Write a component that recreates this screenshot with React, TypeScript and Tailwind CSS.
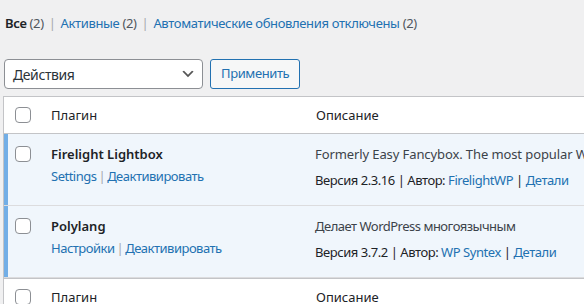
import React from "react";

const font = { fontFamily: '"Noto Sans", "Open Sans", sans-serif' };

type Plugin = {
  name: string;
  actions: string[];
  description: string;
  descTracking: string;
  version: string;
  author: string;
};

const plugins: Plugin[] = [
  {
    name: "Firelight Lightbox",
    actions: ["Settings", "Деактивировать"],
    description:
      "Formerly Easy Fancybox. The most popular WordPress lightbox plugin for images, galleries and videos.",
    descTracking: "tracking-[-0.1px]",
    version: "2.3.16",
    author: "FirelightWP",
  },
  {
    name: "Polylang",
    actions: ["Настройки", "Деактивировать"],
    description: "Делает WordPress многоязычным",
    descTracking: "tracking-[-0.5px]",
    version: "3.7.2",
    author: "WP Syntex",
  },
];

function Checkbox() {
  return (
    <span className="block h-4 w-4 rounded-[4px] border border-[#8c8f94] bg-white" />
  );
}

function HeaderRow({ top }: { top?: boolean }) {
  return (
    <div
      className={`flex h-[37px] bg-white ${
        top ? "border-b border-[#c3c4c7]" : "border-t border-[#c3c4c7]"
      }`}
    >
      <div className="flex w-[37px] shrink-0 justify-center pt-[10px] pl-[1px]">
        <Checkbox />
      </div>
      <div className="w-[264px] shrink-0 pl-[10px] text-[13px] leading-[37px] text-[#1d2327]">
        Плагин
      </div>
      <div className="flex-1 whitespace-nowrap pl-[11px] text-[13px] leading-[37px] text-[#1d2327]">
        Описание
      </div>
    </div>
  );
}

function PluginRow({ plugin }: { plugin: Plugin }) {
  return (
    <div className="flex h-[72px] border-b border-[#dcdcde] bg-[#f0f6fc] shadow-[inset_4px_0_0_#72aee6]">
      <div className="flex w-[37px] shrink-0 justify-center pt-[12px] pl-[1px]">
        <Checkbox />
      </div>
      <div className="w-[264px] shrink-0 pl-[10px] pt-[10px]">
        <div className="text-[13px] font-semibold leading-[20px] text-[#1d2327]">
          {plugin.name}
        </div>
        <div className="mt-[2px] flex text-[13px] leading-[20px] tracking-[-0.5px] text-[#2271b1]">
          {plugin.actions.map((a, i) => (
            <span key={a} className="flex">
              {i > 0 && <span className="mx-[2px] text-[#a7aaad]">|</span>}
              {a}
            </span>
          ))}
        </div>
      </div>
      <div className="min-w-0 flex-1 pl-[10px] pt-[10px]">
        <div
          className={`whitespace-nowrap text-[13px] leading-[20px] text-[#3c434a] ${plugin.descTracking}`}
        >
          {plugin.description}
        </div>
        <div className="mt-[6px] whitespace-nowrap text-[13px] leading-[20px] tracking-[-0.45px] text-[#1d2327]">
          Версия {plugin.version} | Автор:{" "}
          <span className="text-[#2271b1]">{plugin.author}</span>
          <span className="mx-[3px]">|</span>
          <span className="text-[#2271b1]">Детали</span>
        </div>
      </div>
    </div>
  );
}

export default function App() {
  return (
    <div
      className="h-[304px] w-[584px] overflow-hidden bg-[#f0f0f1]"
      style={font}
    >
      {/* Filters */}
      <div className="whitespace-nowrap pl-[5px] pt-[10px] text-[13px] leading-[26px] tracking-[-0.35px] text-[#50575e]">
        <span className="font-semibold text-[#1d2327]">Все</span> (2)
        <span className="px-[5px] text-[#a7aaad]">|</span>
        <span className="text-[#2271b1]">Активные</span> (2)
        <span className="px-[5px] text-[#a7aaad]">|</span>
        <span className="text-[#2271b1]">Автоматические обновления отключены</span>{" "}
        (2)
      </div>

      {/* Bulk actions */}
      <div className="mt-[23px] flex gap-[7px] pl-[4px]">
        <div className="flex h-[30px] w-[199px] items-center justify-between rounded-[4px] border border-[#8c8f94] bg-white pl-[8px] pr-[6px] text-[14px] tracking-[-0.4px] text-[#2c3338]">
          <span>Действия</span>
          <svg width="16" height="16" viewBox="0 0 20 20">
            <path d="M5 6l5 5 5-5 2 1-7 7-7-7 2-1z" fill="#555" />
          </svg>
        </div>
        <div className="flex h-[30px] items-center rounded-[3px] border border-[#2271b1] bg-[#f6f7f7] px-[10px] text-[13px] tracking-[-0.4px] text-[#2271b1]">
          Применить
        </div>
      </div>

      {/* Plugins table */}
      <div className="ml-[3px] mt-[7px] w-[620px] border border-[#c3c4c7] bg-white">
        <HeaderRow top />
        {plugins.map((p) => (
          <PluginRow key={p.name} plugin={p} />
        ))}
        <HeaderRow />
      </div>
    </div>
  );
}
